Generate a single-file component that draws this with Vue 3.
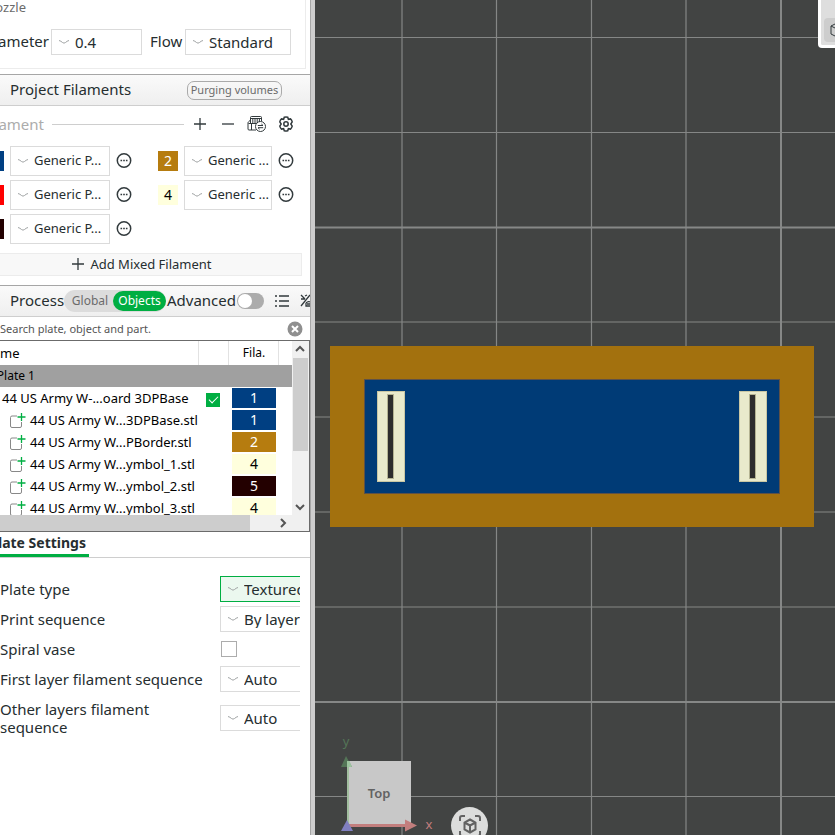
<script setup>
import { ref } from 'vue'

const filaments = [
  { id: 1, color: '#003f82', dark: true, name: 'Generic P...' },
  { id: 2, color: '#b67c0f', dark: true, name: 'Generic ...' },
  { id: 3, color: '#ff0000', dark: true, name: 'Generic P...' },
  { id: 4, color: '#ffffdd', dark: false, name: 'Generic ...' },
  { id: 5, color: '#230000', dark: true, name: 'Generic P...' },
]
const byId = (id) => filaments[id - 1]

const parts = [
  { name: '44 US Army W...3DPBase.stl', fil: 1 },
  { name: '44 US Army W...PBorder.stl', fil: 2 },
  { name: '44 US Army W...ymbol_1.stl', fil: 4 },
  { name: '44 US Army W...ymbol_2.stl', fil: 5 },
  { name: '44 US Army W...ymbol_3.stl', fil: 4 },
]

const settings = [
  { id: 'plate', label: 'Plate type', value: 'Textured', changed: true },
  { id: 'print', label: 'Print sequence', value: 'By layer' },
  { id: 'spiral', label: 'Spiral vase', check: true },
  { id: 'first', label: 'First layer filament sequence', value: 'Auto' },
  { id: 'other', label: 'Other layers filament sequence', value: 'Auto', tall: true },
]

const advanced = ref(false)
const spiral = ref(false)
const printable = ref(true)
const query = ref('')

const columns = [87, 181.5, 276.5, 371]
const rows = [37.5, 132.5, 322, 417, 512, 607, 796.5]
</script>

<template>
  <div class="app">
    <aside class="sidebar">
      <section class="nozzle">
        <h3>ozzle</h3>
        <div class="nozzle-row">
          <label for="diameter">ameter</label>
          <span class="pick diameter">
            <select id="diameter"><option>0.4</option></select>
            <svg viewBox="0 0 12 6"><path d="M1 1.5 Q3 2 4.500 3.500 Q6 4.800 7.500 3.500 Q9 2 11 1.500" /></svg>
          </span>
          <label for="flow" class="flow-label">Flow</label>
          <span class="pick flow">
            <select id="flow"><option>Standard</option></select>
            <svg viewBox="0 0 12 6"><path d="M1 1.5 Q3 2 4.500 3.500 Q6 4.800 7.500 3.500 Q9 2 11 1.500" /></svg>
          </span>
        </div>
      </section>

      <header class="bar">
        <h2>Project Filaments</h2>
        <button class="purge">Purging volumes</button>
      </header>

      <section class="filaments">
        <div class="fil-head">
          <span class="fil-title">ament</span>
          <i class="rule"></i>
          <button class="icon" aria-label="Add filament">
            <svg viewBox="0 0 16 16"><path d="M8 2v12M2 8h12" /></svg>
          </button>
          <button class="icon" aria-label="Remove filament">
            <svg viewBox="0 0 16 16"><path d="M2 8h12" /></svg>
          </button>
          <button class="icon wide" aria-label="Sync filaments">
            <svg viewBox="0 0 20 18">
              <path d="M3.500 5V2.500q0-1 1-1h9q1 0 1 1V6M3.500 3.500h11M5.800 4v4M8 4v4M10.200 4v4M12.400 4v3M3.500 5L1.800 6.500Q1 7 1 8v6q0 1 1 1h7M1.500 8.500H9M4.500 8.500V15M3.500 5v3" />
              <circle cx="13.500" cy="11.500" r="5" />
              <path d="M10.800 10.500h5.200l-1.600-1.500M16.200 12.700H11l1.600 1.500" />
            </svg>
          </button>
          <button class="icon gear" aria-label="Filament settings">
            <svg viewBox="0 0 16 16">
              <path d="M6.300 1.200Q8 .6 9.700 1.200L10.400 3.300 12.500 2.900Q13.800 4 14.200 5.800L12.800 8 14.200 10.200Q13.800 12 12.500 13.100L10.400 12.700 9.700 14.800Q8 15.400 6.300 14.800L5.600 12.700 3.500 13.100Q2.200 12 1.800 10.200L3.200 8 1.800 5.800Q2.200 4 3.500 2.900L5.600 3.300z" />
              <circle cx="8" cy="8" r="2.200" />
            </svg>
          </button>
        </div>

        <div class="fil-grid">
          <div v-for="f in filaments" :key="f.id" class="fil">
            <span class="swatch" :class="{ light: f.dark }" :style="{ background: f.color }">{{ f.id % 2 ? '' : f.id }}</span>
            <span class="pick">
              <select :aria-label="'Filament ' + f.id"><option>{{ f.name }}</option></select>
              <svg viewBox="0 0 12 6"><path d="M1 1.5 Q3 2 4.500 3.500 Q6 4.800 7.500 3.500 Q9 2 11 1.500" /></svg>
            </span>
            <button class="icon more" :aria-label="'Edit filament ' + f.id">
              <svg viewBox="0 0 16 16">
                <circle cx="8" cy="7.500" r="6.700" />
                <path class="dots" d="M4.500 7.500h1.600M7.200 7.500h1.600M9.900 7.500h1.600" />
              </svg>
            </button>
          </div>
        </div>

        <button class="mixed">
          <svg viewBox="0 0 12 12"><path d="M6 0v12M0 6h12" /></svg>
          Add Mixed Filament
        </button>
      </section>

      <header class="bar process">
        <h2>Process</h2>
        <div class="seg">
          <button>Global</button>
          <button class="on">Objects</button>
        </div>
        <label class="adv" for="advanced">Advanced</label>
        <input id="advanced" v-model="advanced" type="checkbox" class="switch" />
        <button class="icon list" aria-label="Object list">
          <svg viewBox="0 0 16 16"><path d="M1 3h2M1 8h2M1 13h2M5 3h10M5 8h10M5 13h10" /></svg>
        </button>
        <button class="icon cut" aria-label="Compare presets">
          <svg viewBox="0 0 16 16"><path d="M1 2l4 4M1 6h4M1 13L10 2M5 3l2-1M6 10q2-2 4-1M6 10v3h5M7 11h4" /></svg>
        </button>
      </header>

      <div class="search">
        <input v-model="query" type="text" aria-label="Search" placeholder="Search plate, object and part." />
        <button aria-label="Clear search">
          <svg viewBox="0 0 16 16"><circle cx="8" cy="8" r="7.500" /><path d="M5 5l6 6M11 5l-6 6" /></svg>
        </button>
      </div>

      <div class="tree">
        <div class="view">
          <table>
            <thead>
              <tr><th class="c-name">me</th><th class="c-check"></th><th class="c-fil">Fila.</th><th></th></tr>
            </thead>
            <tbody>
              <tr class="plate"><td colspan="4"><span class="clip-plate">Plate 1</span></td></tr>
              <tr>
                <td class="object">44 US Army W-...oard 3DPBase</td>
                <td class="c-check"><input v-model="printable" type="checkbox" class="tick" aria-label="Printable" /></td>
                <td class="c-fil"><span class="chip light" :style="{ background: byId(1).color }">1</span></td>
                <td></td>
              </tr>
              <tr v-for="p in parts" :key="p.name">
                <td class="part" colspan="2">
                  <div>
                    <svg viewBox="0 0 16 16"><path d="M8 4H3q-1.500 0-1.500 1.500v8.500q0 1.500 1.500 1.500h8q1.500 0 1.500-1.500V10" /><path class="plus" d="M12.500 1v8M8.500 5h8" /></svg>
                    <span>{{ p.name }}</span>
                  </div>
                </td>
                <td class="c-fil"><span class="chip" :class="{ light: byId(p.fil).dark }" :style="{ background: byId(p.fil).color }">{{ p.fil }}</span></td>
                <td></td>
              </tr>
            </tbody>
          </table>
        </div>
        <div class="vbar">
          <svg viewBox="0 0 16 16"><path d="M4 10l4-4 4 4" /></svg>
          <i></i>
          <svg class="down" viewBox="0 0 16 16"><path d="M4 6l4 4 4-4" /></svg>
        </div>
        <div class="hbar">
          <i></i>
          <svg viewBox="0 0 16 16"><path d="M5 4l4 4-4 4" /></svg>
        </div>
      </div>

      <nav class="tabs"><a href="#plate-settings"><span>late Settings</span></a></nav>

      <section id="plate-settings" class="settings">
        <div v-for="s in settings" :key="s.id" class="setting" :class="{ tall: s.tall }">
          <label :for="s.id">{{ s.label }}</label>
          <input v-if="s.check" :id="s.id" v-model="spiral" type="checkbox" class="box" />
          <span v-else class="pick" :class="{ changed: s.changed }">
            <select :id="s.id"><option>{{ s.value }}</option></select>
            <svg viewBox="0 0 12 6"><path d="M1 1.5 Q3 2 4.500 3.500 Q6 4.800 7.500 3.500 Q9 2 11 1.500" /></svg>
          </span>
        </div>
      </section>
    </aside>

    <div class="splitter"></div>

    <main class="viewport">
      <svg class="scene" width="1600" height="1200" viewBox="0 0 1600 1200">
        <g class="thin">
          <path v-for="x in columns" :key="'c' + x" :d="`M${x} 0V1200`" />
          <path v-for="y in rows" :key="'r' + y" :d="`M0 ${y}H1600`" />
        </g>
        <path class="thick" d="M466 0V1200M0 227.500H1600M0 702H1600" />
        <g shape-rendering="crispEdges">
          <rect x="15" y="346" width="484" height="181" fill="#a3710e" />
          <rect x="49.500" y="379.500" width="415" height="114" fill="#003b76" stroke="#5e5147" />
          <g v-for="x in [62, 424]" :key="x">
            <rect :x="x + 0.5" y="391.500" width="27" height="90" fill="#e9eacc" stroke="#c9c7a4" />
            <rect :x="x + 10.5" y="394.500" width="6" height="84" fill="#2d2d2d" stroke="#b4b392" />
          </g>
        </g>
        <g class="axes">
          <path d="M32 761H96V826H32z" fill="#c8c8c8" />
          <path d="M33 761V826" stroke="#a2bf9f" stroke-width="2" />
          <path d="M31 756l6 11H26z" fill="#547557" />
          <path d="M32 761h2.500l2.500 6h-5z" fill="#9dc49f" />
          <path d="M32 825.500H92" stroke="#c27e7d" stroke-width="3" />
          <path d="M90 819.500l12 6-12 6z" fill="#c27e7d" />
          <path d="M32 820l6 11H26z" fill="#807fc0" />
          <text x="64" y="798" class="top">Top</text>
          <text x="31" y="746" class="ylab">y</text>
          <text x="114" y="829" class="xlab">x</text>
        </g>
      </svg>
      <button class="fit" aria-label="Fit view">
        <svg viewBox="0 0 24 24">
          <path d="M2 7V4q0-2 2-2h3M17 2h3q2 0 2 2v3M22 17v3q0 2-2 2h-3M7 22H4q-2 0-2-2v-3" />
          <path d="M12 5.500l5.500 3v7l-5.500 3-5.500-3v-7zM6.500 8.500l5.500 3 5.500-3M12 11.500v7" />
        </svg>
      </button>
      <div class="toolbar">
        <button aria-label="Add object">
          <svg viewBox="0 0 20 20"><path d="M10 2.500l7 3.500v8l-7 3.500L3 14V6zM3 6l7 3.500L17 6M10 9.500v8" /></svg>
        </button>
      </div>
    </main>
  </div>
</template>

<style>
body {
  margin: 0;
}
</style>

<style scoped>
.app {
  display: flex;
  height: 100vh;
  overflow: hidden;
  font: 15px/18px "Noto Sans", sans-serif;
  color: #262e30;
}
.app * {
  box-sizing: border-box;
}
h2,
h3 {
  margin: 0;
  font-weight: 400;
}
button,
select,
input {
  font: inherit;
  color: inherit;
  margin: 0;
}
button {
  padding: 0;
  border: 0;
  background: none;
}
svg {
  fill: none;
  stroke: #323a3d;
}
.sidebar {
  width: 310px;
  flex: none;
  overflow: hidden;
  background: #fff;
}
.splitter {
  flex: none;
  width: 5px;
  background: #cdcdcd;
  border-left: 1px solid #a6a6a6;
}
.pick {
  display: grid;
  align-items: center;
}
.pick > * {
  grid-area: 1 / 1;
}
.pick select {
  appearance: none;
  width: 100%;
  height: 26px;
  padding: 0 0 1px 23px;
  border: 1px solid #dbdbdb;
  border-radius: 0;
  background: #fff;
}
.pick svg {
  width: 12px;
  height: 6px;
  margin-left: 7px;
  stroke: #a0a3a4;
  pointer-events: none;
}

.nozzle {
  height: 69px;
  margin: 0 4px 5px 0;
  border: solid #ececec;
  border-width: 0 1px 1px 0;
}
.nozzle h3 {
  width: 26px;
  display: flex;
  justify-content: flex-end;
  font-size: 13px;
  line-height: 14px;
  color: #6b6b6b;
}
.nozzle-row {
  display: flex;
  align-items: center;
  margin-top: 15px;
}
.nozzle-row label {
  padding-bottom: 2px;
}
.nozzle-row label:first-child {
  width: 49px;
  display: flex;
  justify-content: flex-end;
  margin-right: 2px;
}
.diameter {
  width: 91px;
}
.flow-label {
  width: 35px;
  margin-left: 8px;
}
.flow {
  width: 106px;
}

.bar {
  display: flex;
  align-items: center;
  height: 32px;
  padding-left: 10px;
  border-top: 1px solid #a6a6a6;
  border-bottom: 1px solid #cecece;
  background: linear-gradient(#fafafa, #efefef);
}
.bar h2 {
  font-size: 15px;
  padding-bottom: 3px;
}
.purge {
  margin: 0 28px 0 auto;
  width: 95px;
  height: 19px;
  border: 1px solid #aaa;
  border-radius: 7px;
  padding-bottom: 2px;
  font-size: 11px;
  line-height: 15px;
  color: #6b6b6b;
  white-space: nowrap;
}

.icon {
  display: flex;
  flex: none;
}
.icon svg {
  width: 16px;
  height: 16px;
  stroke-width: 1.3;
}
.icon.gear svg,
.icon.more svg {
  stroke-width: 1.5;
}
.fil-head {
  display: flex;
  align-items: center;
  gap: 12px;
  height: 36px;
  padding-right: 16px;
}
.fil-title {
  width: 44px;
  display: flex;
  justify-content: flex-end;
  color: #acacac;
}
.rule {
  flex: 1;
  margin: 0 -4px;
  border-top: 1px solid #cecece;
}
.icon.wide svg {
  width: 20px;
  height: 18px;
  stroke-width: 1;
}
.icon.wide {
  margin: 0 -1px 0 -1px;
}
.fil-grid {
  display: grid;
  grid-template-columns: 148px 162px;
  row-gap: 4px;
  margin: 4px 0 9px;
}
.fil {
  display: grid;
  grid-template-columns: 20px 1fr 16px;
  column-gap: 6px;
  align-items: center;
  padding-right: 16px;
}
.fil:nth-child(even) {
  padding-left: 10px;
}
.fil:nth-child(odd) {
  margin-left: -16px;
}
.swatch {
  height: 20px;
  line-height: 20px;
  text-align: center;
  font-size: 14px;
  color: #000;
}
.light {
  color: #fff;
}
.fil .pick select {
  height: 30px;
  padding-bottom: 2px;
  font-size: 13px;
}
.fil .pick {
  width: 100%;
}
.icon .dots {
  stroke-width: 1.6;
}
.mixed {
  display: flex;
  align-items: center;
  justify-content: center;
  gap: 6px;
  width: calc(100% - 8px);
  height: 23px;
  margin-bottom: 9px;
  padding: 0 17px 1px 0;
  border: solid #ececec;
  border-width: 1px 1px 1px 0;
  background: #f8f8f8;
  font-size: 13px;
}
.mixed svg {
  width: 12px;
  height: 12px;
  stroke-width: 1.3;
}

.process {
  overflow: hidden;
}
.seg {
  flex: none;
  display: flex;
  align-items: center;
  width: 102px;
  height: 22px;
  border-radius: 11px;
  background: #dcdcdc;
  font-size: 12px;
}
.seg button {
  width: 49px;
  padding-left: 3px;
  color: #6b6b6b;
}
.seg .on {
  width: 53px;
  height: 20px;
  padding: 0;
  border-radius: 10px;
  background: #00ae42;
  color: #fff;
}
.process h2 {
  flex: none;
  width: 54px;
}
.adv {
  flex: none;
  width: 70px;
  margin-left: 1px;
  padding-bottom: 3px;
}
.switch {
  appearance: none;
  flex: none;
  width: 27px;
  height: 16px;
  border-radius: 8px;
  background: #acacac;
}
.switch::before {
  content: "";
  display: block;
  width: 14px;
  height: 14px;
  margin: 1px;
  border-radius: 50%;
  background: #fff;
}
.switch:checked {
  background: #00ae42;
}
.switch:checked::before {
  margin-left: 12px;
}
.icon.list {
  margin: 0 10px;
}

.search {
  display: flex;
  align-items: center;
  height: 23px;
  padding-right: 7px;
}
.search input {
  flex: 1;
  min-width: 0;
  padding: 0;
  border: 0;
  outline: 0;
  font-size: 11px;
}
.search input::placeholder {
  color: #555;
  opacity: 1;
}
.search button {
  display: flex;
}
.search svg {
  width: 16px;
  height: 16px;
  fill: #8f8f8f;
  stroke: none;
}
.search path {
  stroke: #fff;
  stroke-width: 2;
}

.tree {
  display: grid;
  grid-template: 174px 16px / 1fr 17px;
  border: solid #6b6b6b;
  border-width: 1px 1px 1px 0;
  background: #f0f0f0;
  color: #000;
  font-size: 13px;
}
.view {
  overflow: hidden;
  background: #fff;
}
table {
  width: 100%;
  border-collapse: collapse;
  table-layout: fixed;
}
td,
th {
  height: 22px;
  padding: 0;
  font-weight: 400;
  line-height: 20px;
  white-space: nowrap;
}
th {
  height: 24px;
  border-right: 1px solid #e2e2e2;
}
th:last-child {
  border: 0;
}
.c-name {
  width: 198px;
  text-align: left;
}
.c-check {
  width: 30px;
  text-align: center;
}
.c-fil {
  width: 50px;
  padding: 0 2px 0 4px;
  text-align: center;
}
th.c-fil {
  font-size: 12px;
}
.clip-plate {
  display: flex;
  justify-content: flex-end;
  width: 35px;
  font-size: 12px;
}
.plate td {
  background: #a0a0a0;
}
.object {
  padding-left: 2px;
}
.part div {
  display: flex;
  align-items: center;
  gap: 5px;
  padding-left: 9px;
}
.part svg {
  width: 16px;
  height: 16px;
  overflow: visible;
  stroke: #888;
}
.part .plus {
  stroke: #00ae42;
  stroke-width: 1.3;
}
.chip {
  display: block;
  height: 20px;
  font-size: 14px;
  line-height: 20px;
}
.tick {
  appearance: none;
  display: inline-block;
  width: 14px;
  height: 14px;
  border: 1px solid #acacac;
  vertical-align: middle;
}
.tick:checked {
  border-color: #00ae42;
  background: #00ae42;
}
.tick:checked::before {
  content: "";
  display: block;
  width: 8px;
  height: 4px;
  margin: 2px;
  border: solid #fff;
  border-width: 0 0 1px 1px;
  transform: rotate(-45deg);
}
.vbar {
  display: flex;
  flex-direction: column;
}
.vbar svg,
.hbar svg {
  width: 16px;
  height: 16px;
  stroke: #555;
  stroke-width: 2;
}
.vbar i {
  height: 93px;
  margin: 1px 1px 0;
  background: #cdcdcd;
}
.vbar .down {
  margin-top: auto;
}
.hbar {
  display: flex;
  justify-content: space-between;
}
.hbar i {
  width: 250px;
  background: #cdcdcd;
}

.tabs {
  display: flex;
  border-bottom: 1px solid #cecece;
  height: 26px;
}
.tabs a {
  display: flex;
  justify-content: flex-end;
  width: 89px;
  padding-right: 3px;
  border-bottom: 3px solid #00ae42;
  font-size: 14px;
  line-height: 22px;
  font-weight: 700;
  color: inherit;
  text-decoration: none;
  white-space: nowrap;
}
.settings {
  margin: 16px 10px 0 0;
  overflow: hidden;
}
.setting {
  display: grid;
  grid-template-columns: 200px 1fr;
  column-gap: 20px;
  align-items: center;
  height: 30px;
}
.setting label {
  padding-bottom: 1px;
  white-space: nowrap;
}
.setting.tall {
  height: 48px;
}
.setting.tall label {
  width: 170px;
  white-space: normal;
}
.setting .pick {
  width: 160px;
}
.setting .changed select {
  border-color: #00ae42;
  background: #ebf8ef;
}
.box {
  appearance: none;
  width: 16px;
  height: 16px;
  margin-left: 1px;
  border: 1px solid #acacac;
  background: #fff;
}
.box:checked {
  background: #00ae42;
}

.viewport {
  position: relative;
  flex: 1;
  min-width: 0;
  overflow: hidden;
  background: #424443;
}
.scene {
  position: absolute;
  top: 0;
  left: 0;
  stroke: none;
}
.thin {
  stroke: #858786;
  stroke-width: 1.2;
}
.thick {
  stroke: #868887;
  stroke-width: 2;
}
.axes text {
  font-size: 13px;
  text-anchor: middle;
}
.top {
  fill: #626262;
  font-weight: 600;
}
.axes .ylab {
  fill: #547557;
}
.axes .xlab {
  fill: #c27e7d;
}
.fit {
  position: absolute;
  left: 136px;
  top: 807px;
  display: grid;
  place-items: center;
  width: 37px;
  height: 37px;
  border-radius: 50%;
  background: #dcdddc;
}
.fit svg {
  width: 24px;
  height: 24px;
  stroke: #626262;
  stroke-width: 2;
}
.toolbar {
  position: absolute;
  top: -4px;
  right: -4px;
  width: 21px;
  height: 52px;
  padding-left: 3px;
  overflow: hidden;
  border: solid #fff;
  border-width: 0 0 3px 3px;
  border-radius: 4px;
  background: #dedede;
}
.toolbar button {
  display: flex;
  width: 30px;
  margin-top: 22px;
  padding: 2px 4px;
  border-radius: 4px;
  background: #cdcdcd;
}
.toolbar svg {
  width: 20px;
  height: 20px;
  flex: none;
}
</style>
